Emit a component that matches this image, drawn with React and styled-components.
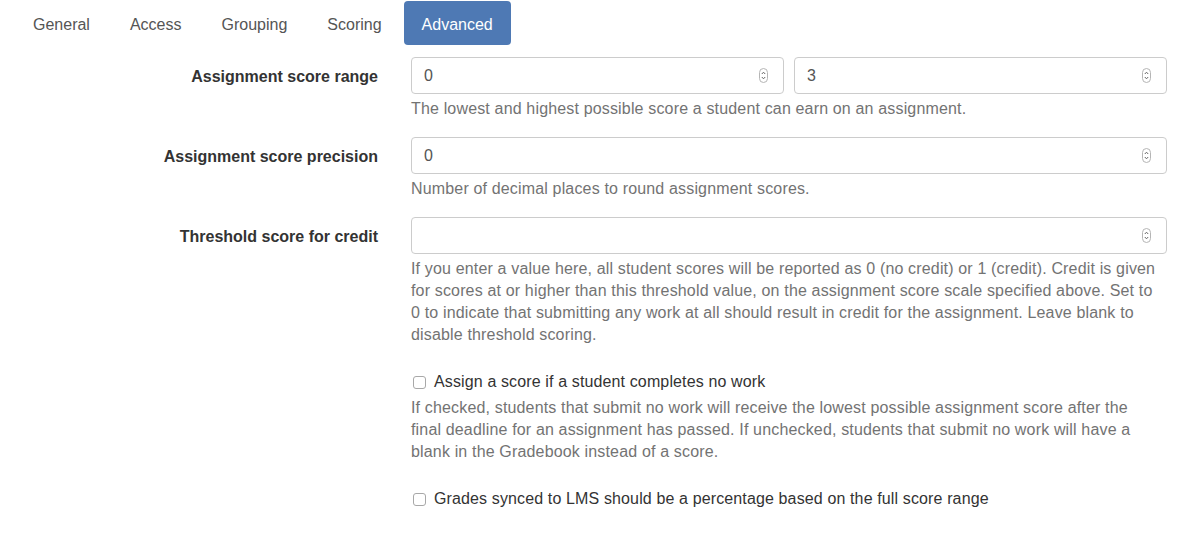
import styled, { createGlobalStyle } from 'styled-components';

const GlobalStyle = createGlobalStyle`
  body {
    margin: 0;
    background: #fff;
    font-family: "Liberation Sans", Arial, sans-serif;
    font-size: 16px;
    line-height: 22px;
    color: #333;
  }
`;

const tabs = ['General', 'Access', 'Grouping', 'Scoring', 'Advanced'];

function Spinner() {
  return (
    <SpinnerIcon width="9" height="15" viewBox="0 0 9 15">
      <rect x="0.5" y="0.5" width="8" height="14" rx="4" fill="#fff" stroke="#b5b5b5" />
      <path d="M2.8 6 L4.5 4.2 L6.2 6" fill="none" stroke="#666" strokeWidth="1" />
      <path d="M2.8 9 L4.5 10.8 L6.2 9" fill="none" stroke="#666" strokeWidth="1" />
    </SpinnerIcon>
  );
}

function NumberInput({ value }) {
  return (
    <InputBox>
      <InputValue>{value}</InputValue>
      <Spinner />
    </InputBox>
  );
}

function FieldRow({ label, children, help }) {
  return (
    <Row>
      <Label>{label}</Label>
      <Field>
        {children}
        {help && <Help>{help}</Help>}
      </Field>
    </Row>
  );
}

function CheckRow({ label, help }) {
  return (
    <Row check>
      <span />
      <Field>
        <CheckLabel>
          <Box />
          {label}
        </CheckLabel>
        {help && <Help>{help}</Help>}
      </Field>
    </Row>
  );
}

export default function App() {
  return (
    <Page>
      <GlobalStyle />
      <Tabs>
        {tabs.map((t) => (
          <Tab key={t} active={t === 'Advanced'}>
            {t}
          </Tab>
        ))}
      </Tabs>
      <Form>
        <FieldRow
          label="Assignment score range"
          help="The lowest and highest possible score a student can earn on an assignment."
        >
          <Pair>
            <NumberInput value="0" />
            <NumberInput value="3" />
          </Pair>
        </FieldRow>
        <FieldRow
          label="Assignment score precision"
          help="Number of decimal places to round assignment scores."
        >
          <NumberInput value="0" />
        </FieldRow>
        <FieldRow
          label="Threshold score for credit"
          help="If you enter a value here, all student scores will be reported as 0 (no credit) or 1 (credit). Credit is given for scores at or higher than this threshold value, on the assignment score scale specified above. Set to 0 to indicate that submitting any work at all should result in credit for the assignment. Leave blank to disable threshold scoring."
        >
          <NumberInput value="" />
        </FieldRow>
        <CheckRow
          label="Assign a score if a student completes no work"
          help="If checked, students that submit no work will receive the lowest possible assignment score after the final deadline for an assignment has passed. If unchecked, students that submit no work will have a blank in the Gradebook instead of a score."
        />
        <CheckRow label="Grades synced to LMS should be a percentage based on the full score range" />
      </Form>
    </Page>
  );
}

const Page = styled.div`
  width: 1183px;
  height: 533px;
  overflow: hidden;
`;

const Tabs = styled.nav`
  display: flex;
  gap: 4px;
  padding: 1px 0 0 15px;
`;

const Tab = styled.div`
  height: 44px;
  line-height: 47px;
  padding: 0 18px;
  border-radius: 4px;
  color: ${({ active }) => (active ? '#fff' : '#555')};
  background: ${({ active }) => (active ? '#4e79b4' : 'transparent')};
`;

const Form = styled.div`
  display: flex;
  flex-direction: column;
  padding-top: 12px;
`;

const Row = styled.div`
  display: grid;
  grid-template-columns: 378px 756px;
  column-gap: 33px;
  margin-top: ${({ check }) => (check ? '8px' : '0')};
  margin-bottom: 17px;
`;

const Label = styled.label`
  text-align: right;
  font-weight: bold;
  line-height: 39px;
  color: #333;
`;

const Field = styled.div`
  display: flex;
  flex-direction: column;
`;

const Pair = styled.div`
  display: grid;
  grid-template-columns: 1fr 1fr;
  gap: 10px;
`;

const InputBox = styled.div`
  display: flex;
  align-items: center;
  justify-content: space-between;
  height: 37px;
  box-sizing: border-box;
  padding: 0 15px 0 12px;
  border: 1px solid #ccc;
  border-radius: 4px;
  color: #555;
`;

const InputValue = styled.span``;

const SpinnerIcon = styled.svg`
  display: block;
`;

const Help = styled.div`
  max-width: 747px;
  margin-top: 4px;
  color: #737373;
  letter-spacing: 0.16px;
`;

const CheckLabel = styled.label`
  display: flex;
  align-items: center;
  gap: 8px;
  padding-left: 2px;
  color: #333;
  letter-spacing: 0.13px;
`;

const Box = styled.span`
  width: 11px;
  height: 11px;
  border: 1px solid #a8a8a8;
  border-radius: 3px;
  background: #fff;
`;
